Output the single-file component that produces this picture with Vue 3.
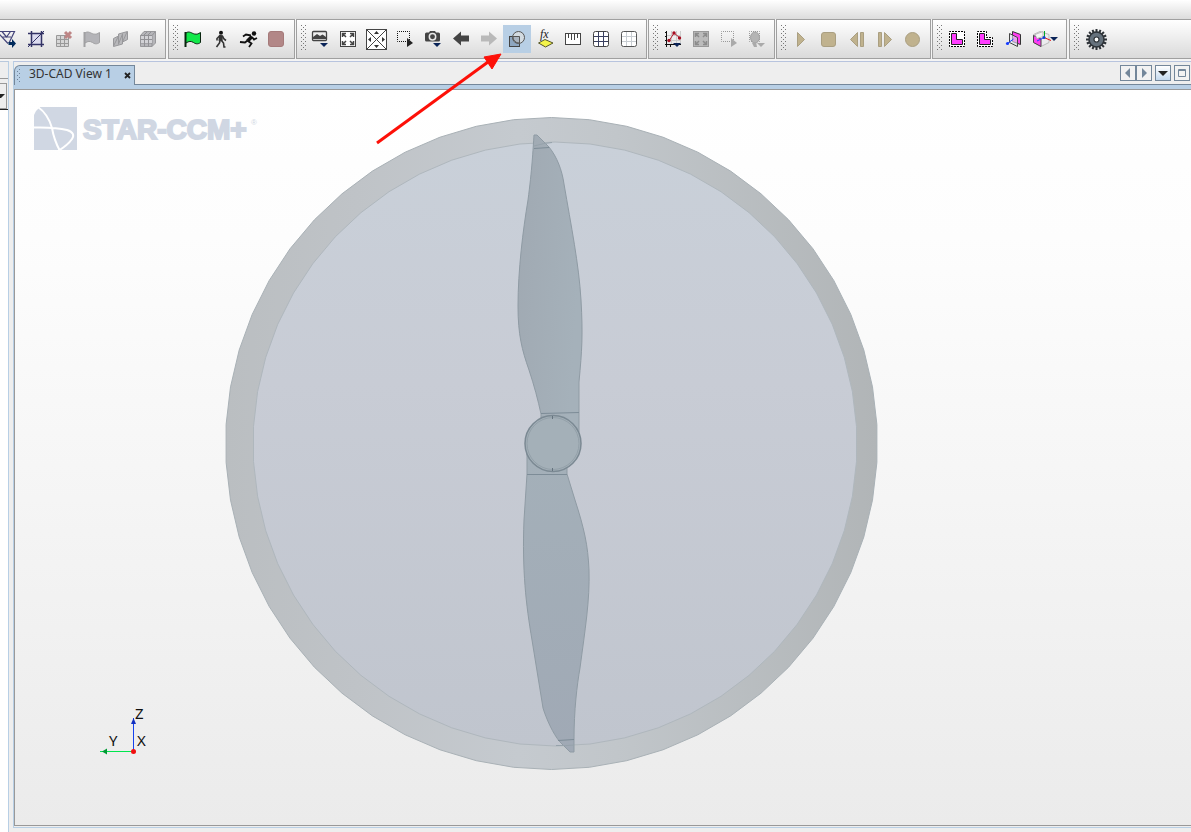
<script setup>
const NAVY = '#0a2458'
const flag = (fill, stroke) =>
  `<path d="M6.500 7V22" stroke="${stroke}" stroke-width="2"/><path d="M7 8C10 5.500 13 8.500 15.500 9C18 9.500 19 9 21.500 7.500V17.500C19 19.500 16.500 19 14.500 17.500C12 16 10 16 7 18Z" fill="${fill}" stroke="${stroke}"/>`
const drop = (x, y, fill = NAVY) => `<path d="M${x} ${y}h8l-4 4z" fill="${fill}"/>`
const dots = (w, h, c) =>
  `<rect x="6.500" y="6.500" width="${w}" height="${h}" fill="none" stroke="${c}" stroke-dasharray="1 1" stroke-dashoffset=".5"/>`
const corners = (c) =>
  `<path d="M8.500 12V8.500H12M16 8.500h3.500V12M19.500 16v3.500H16M12 19.500H8.500V16M9 9l3 3M19 9l-3 3M19 19l-3-3M9 19l3-3" stroke="${c}" stroke-width="1.500" fill="none"/>`
const gearTeeth = Array.from({ length: 16 }, (_, i) =>
  `<rect x="15.500" y="4" width="2" height="4" transform="rotate(${i * 22.5} 16.500 14.500)" fill="#2e3338"/>`).join('')

const groups = [
  { cls: 'first', grip: false, tools: [
    { name: 'Filter', svg: `<path d="M5 6.500H20.500L15 18M3 6.500L14 18.500M8 12h9M8 6.500l4.500 5.500 4-5.500" fill="none" stroke="#44447a" stroke-width="1.200"/><path d="M14.500 17H18v-3l4 4.500-4 4.500v-3h-3.500z" fill="#002b5c"/>` },
    { name: 'Clip', svg: `<rect x="9.500" y="8.500" width="10" height="11" fill="#dcdcf0"/><path d="M6 8.500H22M9.500 6V22M19.500 6V22M6 19.500H22" stroke="#333366" stroke-width="1.500" fill="none"/><path d="M6 22L22 6" stroke="#333366"/>` },
    { name: 'Delete mesh', svg: `<path d="M6.500 10.500h12v11h-12zM10.500 10.500v11M14.500 10.500v11M6.500 14.500h12M6.500 18.500h12" fill="#d6d6d6" stroke="#999"/><path d="M15 7l6 6M21 7l-6 6" stroke="#bd8585" stroke-width="3"/>` },
    { name: 'Surface mesh', svg: flag('#b4b4b8', '#a0a0a2') },
    { name: 'Prism mesh', svg: `<path d="M7.500 13.500L12.500 11V9L21.500 6.500V14.500L16.500 17V19L7.500 21.500Z" fill="#b8b8bb" stroke="#98989b"/><path d="M12.500 11V19.500M16.500 8.500V17M7.500 21L12.500 11M12.500 19L16.500 9M16.500 17L21 7" stroke="#98989b" fill="none"/>` },
    { name: 'Volume mesh', svg: `<path d="M6.500 10.500L10 6.500H21.500V18L18 21.500H6.500Z" fill="#b5b5b9" stroke="#98989b"/><path d="M6.500 10.500H18V21.500M18 10.500L21.500 6.500M10.500 10.500v11M14.500 10.500v11M6.500 14.500H18M6.500 18H18M10 10l3-3M14 10l3-3" stroke="#919195" fill="none"/><path d="M7 11h3v3H7zM11 11h3v3h-3zM15 11h3v3h-3zM7 15h3v3H7zM11 15h3v3h-3zM15 15h3v3h-3z" fill="#d2d2d6"/>` },
  ] },
  { cls: 'run', grip: true, tools: [
    { name: 'Initialize', svg: flag('#12e84a', '#09240f') },
    { name: 'Step', svg: `<circle cx="14" cy="7.800" r="2" fill="#111"/><path d="M14 10L13.500 16" stroke="#333" stroke-width="4"/><path d="M12.500 11L10 13.500v2M15.500 11l1.500 3 2 1.500M13 15.500L12.500 18l-3 4M14.500 15.500l2 2.500 .500 4h1.500" stroke="#333" stroke-width="1.600" fill="none"/>` },
    { name: 'Run', svg: `<circle cx="19" cy="8.500" r="2.200" fill="#111"/><path d="M17 11.500L12.500 16" stroke="#111" stroke-width="3.600"/><path d="M16 10.500L11 9.500 8 11.500M17 12l2 2.500 3-1.500M12.500 15.500L10 17.500 5 17M13 16l3.500 2.500L14 22" stroke="#111" stroke-width="1.800" fill="none"/>` },
    { name: 'Stop', svg: `<rect x="5.500" y="6.500" width="15" height="15" rx="2.500" fill="#b28787" stroke="#a57a7a"/>` },
  ] },
  { cls: 'view', grip: true, tools: [
    { name: 'Scenes', svg: `<rect x="5.500" y="6.500" width="14" height="9" rx="1" fill="#eee" stroke="#444" stroke-width="1.300"/><path d="M6 14v-2l4-3 3 2 2.500-1.500L19 12v2H6z" fill="#444"/>${drop(13, 18)}` },
    { name: 'Fit view', svg: `<rect x="5.500" y="6.500" width="15" height="15" fill="#fff" stroke="#444"/><g transform="translate(-1 0)">${corners('#444')}</g>` },
    { name: 'Reset view', svg: `<rect x="3.500" y="4.500" width="20" height="20" fill="#fff" stroke="#444"/><path d="M4 5L11 12M23 5l-7 7M4 24l7-7M23 24l-7-7M11 12l5 5M16 12l-5 5" stroke="#444" fill="none"/><path d="M13.500 6l2.500 3h-5zM13.500 23l2.500-3h-5zM5 14.500l3-2.500v5zM22 14.500l-3-2.500v5z" fill="#333"/>` },
    { name: 'Select', svg: `${dots(12, 10, '#111')}<path d="M16 13l6 5-6 4z" fill="#222"/>` },
    { name: 'Camera', svg: `<path d="M6 9q0-1.500 1.500-1.500H10L11 6h5l1 1.500h2.500Q21 7.500 21 9v6q0 1.500-1.500 1.500h-12Q6 16.500 6 15Z" fill="#444"/><circle cx="13.500" cy="11.800" r="3.200" fill="none" stroke="#e8e8e8" stroke-width="1.500"/>${drop(14, 18)}` },
    { name: 'Back', svg: `<path d="M6 13.500L14 6.500V10.500H22V16.500H14V20.500Z" fill="#444"/>` },
    { name: 'Forward', svg: `<path d="M22 13.500L14 6.500V10.500H6V16.500H14V20.500Z" fill="#b9b9b9"/>` },
    { name: 'Transparency', on: true, svg: `<rect x="6.500" y="11.500" width="10" height="10" fill="#8da6c0" stroke="#444"/><circle cx="15.500" cy="12.500" r="6" fill="#dadde0" fill-opacity=".8" stroke="#555"/><path d="M10 11.500h6.500V18A6 6 0 0 1 10 11.500" fill="#a9b4c0" stroke="#555"/>` },
    { name: 'Field function', svg: `<text x="9" y="13" font-family="Liberation Serif, serif" font-style="italic" font-size="12" fill="#222">fx</text><path d="M7.500 18L14 14.500L22 18L14.500 22Z" fill="#f4f44a" stroke="#55552a"/>` },
    { name: 'Ruler', svg: `<rect x="6.500" y="8.500" width="15" height="11" fill="#fff" stroke="#444"/><path d="M9.500 9v4M12.500 9v6M15.500 9v6M18.500 9v4" stroke="#444"/>` },
    { name: 'Grid', svg: `<rect x="6.500" y="6.500" width="15" height="15" rx="2" fill="#fff" stroke="#444"/><path d="M11.500 7v14M16.500 7v14M7 11.500h14M7 16.500h14" stroke="#3a4060"/>` },
    { name: 'Light grid', svg: `<rect x="6.500" y="6.500" width="15" height="15" rx="2" fill="#fff" stroke="#555"/><path d="M11.500 7v14M16.500 7v14M7 11.500h14M7 16.500h14" stroke="#c8cdd2"/>` },
  ] },
  { cls: 'plot', grip: true, tools: [
    { name: 'Plot', svg: `<path d="M12.500 6v14M17.500 6v14M8 10.500h14M8 15.500h14M21.500 6v14" stroke="#ccc"/><path d="M7.500 6v16M6 7.500h2M6 11.500h2M6 15.500h2M6 19.500h16M11.500 19v3" stroke="#111" fill="none"/><path d="M10 16l5-8 6 5" stroke="#b51c2d" fill="none"/><g fill="#a50e21"><circle cx="10" cy="15.500" r="1.700"/><circle cx="15" cy="8" r="1.700"/><circle cx="20.500" cy="13" r="1.700"/></g>${drop(14, 18)}` },
    { name: 'Fit plot', svg: `<rect x="6.500" y="6.500" width="15" height="15" fill="#bbb" stroke="#999"/>${corners('#8c8c8c')}` },
    { name: 'Select plot', svg: `${dots(12, 10, '#999')}<path d="M16 13l6 5-6 4z" fill="#aaa"/>` },
    { name: 'Mouse mode', svg: `${dots(10, 10, '#999')}<ellipse cx="12" cy="12.500" rx="4.500" ry="5.500" fill="#b4b4b4" stroke="#a0a0a0"/><path d="M9 18l2 4h3l-1-5z" fill="#aaa"/>${drop(14, 18, '#aaa')}` },
  ] },
  { cls: 'play', grip: true, tools: [
    { name: 'Play', svg: `<path d="M10.500 7.500L17.500 14.500L10.500 21.500Z" fill="#c0b28e" stroke="#aa9f81"/>` },
    { name: 'Stop playback', svg: `<rect x="6.500" y="7.500" width="14" height="14" rx="2.500" fill="#c0b28e" stroke="#aa9f81"/>` },
    { name: 'Step back', svg: `<path d="M7.500 14.500L14.500 7.500V21.500ZM17.500 7.500h3v14h-3z" fill="#c0b28e" stroke="#aa9f81"/>` },
    { name: 'Step forward', svg: `<path d="M20.500 14.500L13.500 7.500V21.500ZM7.500 7.500h3v14h-3z" fill="#c0b28e" stroke="#aa9f81"/>` },
    { name: 'Record', svg: `<circle cx="13.500" cy="14.500" r="7" fill="#c0b28e" stroke="#aa9f81"/>` },
  ] },
  { cls: 'section', grip: true, tools: [
    { name: 'Zone select', svg: `<rect x="6.500" y="6.500" width="15" height="15" fill="#fff" stroke="#000" stroke-dasharray="2 1" stroke-dashoffset=".5"/><path d="M8.500 8.500h5v6h6v5h-11z" fill="#ff3dff" stroke="#222"/>` },
    { name: 'Zone intersect', svg: `<path d="M6.500 6.500h9v6h6v9h-15z" fill="#fff" stroke="#000" stroke-dasharray="2 1" stroke-dashoffset=".5"/><path d="M8.500 8.500h5v6h6v5h-11z" fill="#ff3dff" stroke="#222"/>` },
    { name: 'Section plane', svg: `<path d="M13.500 6.500L21.500 9.500V19.500L13.500 16.500Z" fill="#ff3df0" stroke="#333"/><path d="M10.500 8.500L18.500 12.500V21.500L10.500 17.500Z" fill="#dce4f0" fill-opacity=".6" stroke="#444"/><path d="M8.500 18.500l6-4.500" stroke="#153cff"/><circle cx="8.500" cy="18.500" r="1.600" fill="#153cff"/>` },
    { name: 'Clip planes', wide: true, svg: `<path d="M6.500 9.500L13 6.500L22 9.500V17.500L14 21.500L6.500 17.500Z" fill="#ececef" stroke="#bbb"/><path d="M6.500 10.500L14 14V21.500L6.500 17.500Z" fill="#ff3df0" stroke="#444"/><path d="M8 9.500l8-3v5l-6 2z" fill="#f5f5f5" stroke="#bbb"/><path d="M17.500 6v7" stroke="#00a82c"/><path d="M17 12.500l7 3" stroke="#e01515"/><path d="M10 16l7-3.500" stroke="#233cff"/><circle cx="17" cy="12.500" r="1.500" fill="#123fd0"/>${drop(23, 12)}` },
  ] },
  { cls: 'last', grip: true, tools: [
    { name: 'Settings', wide: true, svg: `${gearTeeth}<circle cx="16.500" cy="14.500" r="7.500" fill="#66727d" stroke="#2e3338" stroke-width="1.500"/><circle cx="16.500" cy="14.500" r="2.500" fill="#fff" stroke="#2e3338" stroke-width="1.200"/>` },
  ] },
]

// The tessellated disc has 54 facets, with corners at top and bottom.
const FACETS = 54
function facets(cx, cy, r) {
  return Array.from({ length: FACETS }, (_, i) => {
    const a = ((i + 0.5) * 2 * Math.PI) / FACETS
    return `${(cx + r * Math.cos(a)).toFixed(1)},${(cy + r * Math.sin(a)).toFixed(1)}`
  }).join(' ')
}
const outer = facets(551.5, 443.5, 326)
const inner = facets(555, 444, 302)
</script>

<template>
  <div class="app">
    <div class="titlebar"></div>
    <div class="toolbar">
      <div v-for="g in groups" :key="g.cls" class="group" :class="g.cls">
        <svg v-if="g.grip" class="grip" width="6" height="26" aria-hidden="true">
          <defs>
            <pattern :id="'dots-' + g.cls" width="4" height="4" patternUnits="userSpaceOnUse">
              <path d="M0 0h1v1H0zM2 2h1v1H2z" fill="#777" />
            </pattern>
          </defs>
          <rect width="6" height="26" :fill="`url(#dots-${g.cls})`" />
        </svg>
        <button
          v-for="t in g.tools"
          :key="t.name"
          type="button"
          class="tool"
          :class="{ on: t.on, wide: t.wide }"
          :aria-label="t.name"
        >
          <svg :width="t.wide ? 36 : 28" height="28" v-html="t.svg"></svg>
        </button>
      </div>
    </div>

    <div class="work">
      <aside class="side">
        <div class="side-head"></div>
        <button type="button" class="combo" aria-label="Show list">
          <svg width="5" height="4"><path d="M0 0h5L1 4H0z" fill="#222" /></svg>
        </button>
        <div class="side-body"></div>
      </aside>

      <main class="editor">
        <div class="tabs">
          <div class="tab">
            <svg class="tab-grip" width="5" height="14" aria-hidden="true">
              <path d="M0 2h1v1H0zM2 0h1v1H2zM0 6h1v1H0zM2 4h1v1H2zM0 10h1v1H0zM2 8h1v1H2zM2 12h1v1H2z" fill="#6f839a" />
            </svg>
            <span class="tab-title">3D-CAD View 1</span>
            <button type="button" class="close" aria-label="Close tab">
              <svg width="7" height="7"><path d="M1 1l5 5M6 1L1 6" stroke="#222" stroke-width="1.800" /></svg>
            </button>
          </div>
          <div class="tab-tools">
            <span class="pair">
              <button type="button" aria-label="Previous tab"><svg width="14" height="14"><path d="M9 2v10L4 7z" fill="#74879a" /></svg></button>
              <button type="button" aria-label="Next tab"><svg width="14" height="14"><path d="M5 2v10l5-5z" fill="#74879a" /></svg></button>
            </span>
            <button type="button" class="blue" aria-label="Tab list"><svg width="14" height="14"><path d="M2 5h10L7 10z" fill="#222" /></svg></button>
            <button type="button" aria-label="Maximize"><svg width="14" height="14"><path d="M3.500 3.500h7v7h-7zM3 4.500h8" fill="none" stroke="#74879a" /></svg></button>
          </div>
        </div>
        <div class="band"></div>

        <div class="canvas">
          <svg class="scene" role="img" aria-label="Propeller inside a transparent disc">
            <defs>
              <linearGradient id="ring" x1="0" y1="0" x2="1" y2="0">
                <stop offset="0" stop-color="#babec1" />
                <stop offset=".2" stop-color="#bfc3c7" />
                <stop offset=".45" stop-color="#c5cacf" />
                <stop offset=".6" stop-color="#c1c6ca" />
                <stop offset="1" stop-color="#b1b5b7" />
              </linearGradient>
              <linearGradient id="disc" x1="0" y1="0" x2="0" y2="1">
                <stop offset="0" stop-color="#c9d0d9" />
                <stop offset=".4" stop-color="#c8ccd5" />
                <stop offset="1" stop-color="#c0c5ce" />
              </linearGradient>
              <linearGradient id="blade" x1="0" y1="0" x2="1" y2=".3">
                <stop offset="0" stop-color="#a0a9b2" />
                <stop offset="1" stop-color="#a5b1ba" />
              </linearGradient>
              <linearGradient id="blade2" x1="0" y1="0" x2="0" y2="1">
                <stop offset="0" stop-color="#a4b0b9" />
                <stop offset="1" stop-color="#a0a9b5" />
              </linearGradient>
            </defs>
            <g transform="translate(-15 -90)">
              <g class="logo">
                <path d="M34 115Q36 110 40 107H77V150H34Z" />
                <path class="swoosh" d="M38 107Q48 114 52 128Q54 140 60 151M34 127.500Q56 127 67 130Q76 133 72 139Q68 145 58 151" />
                <text class="brand" x="83" y="139">STAR-CCM+</text>
                <text class="reg" x="251" y="125">®</text>
              </g>
              <polygon :points="outer" fill="url(#ring)" stroke="#a9b1b6" stroke-width="1" />
              <polygon :points="inner" fill="url(#disc)" stroke="#afb7bd" stroke-width="1" />
              <path d="M534 135H537L549 147C557 157 562 170 564 184C571 225 579 265 581 300C583 335 582 350 579 382L579 432H541V414C538 400 534 385 529 370C522 350 518 335 518 306C518 270 523 230 528 200C532 170 533 150 534 135Z" fill="url(#blade)" stroke="#8f9ba4" stroke-width="1" />
              <path d="M527 452V474L524 520C522 570 526 605 532 640L543 708C546 718 553 734 560 742L570 752H574V740C574 710 577 685 580 668C585 630 590 600 589 570C588 545 584 528 575 500L567 474V452Z" fill="url(#blade2)" stroke="#8f9ba4" stroke-width="1" />
              <path d="M534 148.500L549 147.500M541 413.500L579 412.500M527 474.500H567M558 740.500L574 739.500" stroke="#7d8c97" fill="none" />
              <circle cx="553" cy="443.500" r="28" fill="#a4b0b8" stroke="#7b8993" stroke-width="1.500" />
              <circle cx="553" cy="443.500" r="26" fill="none" stroke="#93a0a9" />
              <path d="M552.500 416v3M552.500 468v3" stroke="#65737e" />
              <path d="M534 146Q544 143 552 142.500M556 745.500Q566 746 574 745" stroke="#96a2ab" fill="none" />
              <g class="axes">
                <path d="M133.500 750V718" stroke="#1642ee" />
                <path d="M131 724l2.500-6 2.500 6z" fill="#1230c0" />
                <path d="M132 751.500H100" stroke="#00e64d" />
                <path d="M107 748.500v6l-5-3z" fill="#009a34" />
                <circle cx="133.500" cy="751.500" r="2.500" fill="#f01010" />
                <text x="135" y="719">Z</text>
                <text x="109" y="746">Y</text>
                <text x="137" y="746">X</text>
              </g>
            </g>
          </svg>
        </div>
      </main>
    </div>

    <svg class="callout" width="520" height="160" aria-hidden="true">
      <path d="M377 143L488 62" stroke="#fd1008" stroke-width="3" />
      <path d="M501 54L492 69L484 57Z" fill="#fd1008" stroke="#fd1008" />
    </svg>
  </div>
</template>

<style>
html, body { margin: 0; background: #eee; }
</style>

<style scoped>
.app {
  position: relative;
  display: flex;
  flex-direction: column;
  min-height: 100vh;
  overflow: hidden;
  background: #eee;
  font-family: "Noto Sans", "DejaVu Sans", sans-serif;
}
button { padding: 0; margin: 0; border: 0; background: none; display: block; }
svg { display: block; }
.titlebar { height: 19px; background: linear-gradient(#fff, #dcdcdc); }
.toolbar {
  display: flex;
  gap: 1px;
  height: 40px;
  padding-bottom: 2px;
  background: #f4f4f4;
}
.group {
  box-sizing: border-box;
  flex: none;
  display: flex;
  align-items: flex-start;
  padding: 5px 3px 0 4px;
  border: 1px solid #a0a0a0;
  background: linear-gradient(#fff, #dadada);
}
.first { margin-left: -7px; padding-left: 0; }
.run, .last { margin-left: 1px; }
.last { flex: 1; border-right: 0; }
.grip { width: 6px; height: 26px; }
.tool { width: 28px; height: 28px; overflow: hidden; }
.tool.wide { width: 36px; }
.tool.on { background: #b8cfe5; }

.work { flex: 1; display: flex; gap: 4px; }
.side {
  width: 8px;
  display: flex;
  flex-direction: column;
  border-top: 1px solid #b8c8dc;
  border-right: 1px solid #b8cfe5;
}
.side-head { height: 16px; border-bottom: 1px solid #999; }
.combo {
  box-sizing: border-box;
  width: 7px;
  height: 26px;
  margin-top: 4px;
  border: 1px solid #999;
  border-left: 0;
  background: #eee;
}
.side-body { flex: 1; border-top: 1px solid #222; background: #fff; }
.editor {
  flex: 1;
  min-width: 0;
  display: flex;
  flex-direction: column;
  margin-bottom: 4px;
  border: 1px solid #b8cfe5;
  border-top-color: #b8c4de;
  border-right: 0;
}
.tabs {
  display: flex;
  justify-content: space-between;
  align-items: flex-start;
  height: 20px;
  padding-top: 3px;
  box-shadow: inset 0 -1px #74879a;
}
.tab {
  box-sizing: border-box;
  display: flex;
  align-items: center;
  width: 121px;
  height: 20px;
  padding-left: 2px;
  border: 1px solid #74879a;
  border-bottom: 0;
  border-top-left-radius: 6px;
  background: #b8cfe5;
}
.tab-title {
  margin-left: 7px;
  padding-bottom: 3px;
  font-size: 12px;
  line-height: 16px;
  color: #333;
  white-space: nowrap;
}
.close { margin-left: auto; margin-right: 3px; }
.tab-tools { display: flex; gap: 3px; padding-right: 1px; }
.pair { display: flex; }
.tab-tools button {
  box-sizing: border-box;
  width: 16px;
  height: 16px;
  border: 1px solid #74879a;
  background: #f2f2f2;
}
.tab-tools .blue { background: linear-gradient(#fff, #c4d9ee); }
.band { height: 4px; background: #b8cfe5; }
.canvas {
  flex: 1;
  display: flex;
  border: 1px solid #999;
  border-right: 0;
  margin-bottom: 1px;
  background: linear-gradient(#fff, #fdfdfd 20%, #ebebeb);
}
.scene { flex: 1; min-width: 0; min-height: 300px; }
.logo { fill: #d0d7e3; }
.swoosh { fill: none; stroke: #fff; stroke-width: 2px; }
.brand {
  font: bold 28px "Liberation Sans", Arial, sans-serif;
  stroke: #d0d7e3;
  stroke-width: 2px;
}
.reg { font: 8px "Liberation Sans", Arial, sans-serif; }
.axes text { font: 15px "Noto Sans", sans-serif; fill: #111; }
.callout { position: absolute; left: 0; top: 0; pointer-events: none; }
</style>
